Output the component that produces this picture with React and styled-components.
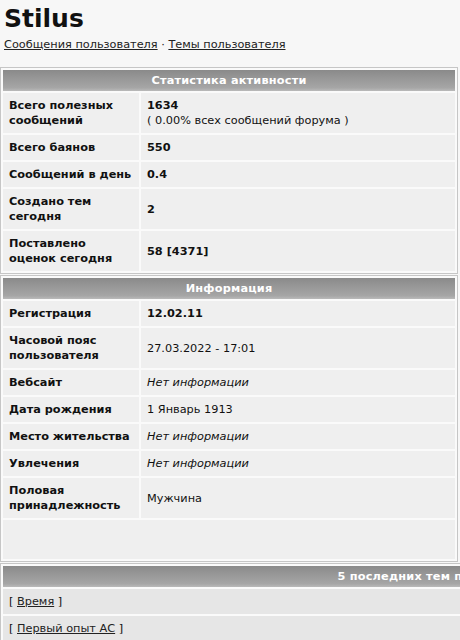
import React from "react";
import styled, { createGlobalStyle } from "styled-components";

const GlobalStyle = createGlobalStyle`
  html, body {
    margin: 0;
    padding: 0;
    background: #f7f7f7;
    overflow-x: hidden;
  }
  body {
    font-family: "DejaVu Sans", Verdana, sans-serif;
    font-size: 11.3px;
    color: #111;
  }
`;

const stats = [
  { label: "Всего полезных сообщений", value: "1634", note: "( 0.00% всех сообщений форума )" },
  { label: "Всего баянов", value: "550" },
  { label: "Сообщений в день", value: "0.4" },
  { label: "Создано тем сегодня", value: "2" },
  { label: "Поставлено оценок сегодня", value: "58 [4371]" },
];

const info = [
  { label: "Регистрация", value: "12.02.11", kind: "bold" },
  { label: "Часовой пояс пользователя", value: "27.03.2022 - 17:01" },
  { label: "Вебсайт", value: "Нет информации", kind: "empty" },
  { label: "Дата рождения", value: "1 Январь 1913" },
  { label: "Место жительства", value: "Нет информации", kind: "empty" },
  { label: "Увлечения", value: "Нет информации", kind: "empty" },
  { label: "Половая принадлежность", value: "Мужчина" },
];

const topics = ["Время", "Первый опыт АС"];

function Cols() {
  return (
    <colgroup>
      <col style={{ width: 136 }} />
      <col />
    </colgroup>
  );
}

export default function App() {
  return (
    <Page>
      <GlobalStyle />
      <Head>
        <h1>Stilus</h1>
        <Links>
          <a href="#">Сообщения пользователя</a> · <a href="#">Темы пользователя</a>
        </Links>
      </Head>

      <Table $first>
        <Cols />
        <tbody>
          <tr>
            <Header colSpan={2}>Статистика активности</Header>
          </tr>
          {stats.map((r) => (
            <tr key={r.label}>
              <Label>{r.label}</Label>
              <Value $kind="bold">
                {r.value}
                {r.note && <Note>{r.note}</Note>}
              </Value>
            </tr>
          ))}
        </tbody>
      </Table>

      <Table>
        <Cols />
        <tbody>
          <tr>
            <Header colSpan={2}>Информация</Header>
          </tr>
          {info.map((r) => (
            <tr key={r.label}>
              <Label>{r.label}</Label>
              <Value $kind={r.kind}>{r.value}</Value>
            </tr>
          ))}
          <tr>
            <Spacer colSpan={2} />
          </tr>
        </tbody>
      </Table>

      <Table $wide>
        <tbody>
          <tr>
            <Header>5 последних тем пользователя</Header>
          </tr>
          {topics.map((t) => (
            <tr key={t}>
              <Topic>
                [ <a href="#">{t}</a> ]
              </Topic>
            </tr>
          ))}
        </tbody>
      </Table>
    </Page>
  );
}

const Page = styled.div`
  width: 460px;
  overflow: hidden;
`;

const Head = styled.div`
  padding: 4px 4px 0;

  h1 {
    margin: 0;
    font-size: 25px;
    line-height: 30px;
    font-weight: bold;
    color: #111;
  }
`;

const Links = styled.div`
  margin-top: 3px;
  line-height: 16px;
  color: #222;

  a {
    color: #222;
    text-decoration: underline;
  }
`;

const Table = styled.table`
  width: ${(p) => (p.$wide ? "884px" : "458px")};
  margin-top: ${(p) => (p.$first ? "14px" : "1px")};
  border: 1px solid #c6c6c6;
  border-collapse: separate;
  border-spacing: 2px;
  background: #fafafa;
  table-layout: fixed;
  font-size: 11.3px;
`;

const Header = styled.th`
  height: 21px;
  padding: 0 4px;
  background: linear-gradient(#8a8a8a, #a6a6a6 85%, #bababa);
  color: #fff;
  font-weight: bold;
  text-align: center;
  letter-spacing: 0.2px;
`;

const Label = styled.td`
  padding: 5px 6px;
  background: #efefef;
  font-weight: bold;
  line-height: 15px;
  vertical-align: middle;
`;

const Value = styled.td`
  padding: 5px 6px;
  background: #efefef;
  line-height: 15px;
  vertical-align: middle;
  font-weight: ${(p) => (p.$kind === "bold" ? "bold" : "normal")};
  font-style: ${(p) => (p.$kind === "empty" ? "italic" : "normal")};
`;

const Note = styled.div`
  font-weight: normal;
`;

const Spacer = styled.td`
  height: 39px;
  padding: 0;
  background: #efefef;
`;

const Topic = styled.td`
  padding: 5px 6px;
  background: #e6e6e6;
  line-height: 15px;

  a {
    color: #222;
    text-decoration: underline;
  }
`;
